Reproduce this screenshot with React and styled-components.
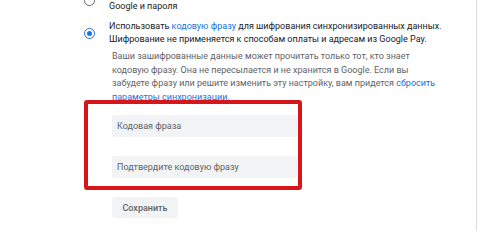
import React from "react";
import styled, { createGlobalStyle } from "styled-components";

const Global = createGlobalStyle`
  html, body { margin: 0; padding: 0; background: #ffffff; }
  body { font-family: Roboto, "Noto Sans", "Liberation Sans", sans-serif; }
  * { box-sizing: border-box; }
`;

const Page = styled.div`
  width: 477px;
  height: 231px;
  border-right: 1px solid #dadce0;
  overflow: hidden;
  background: #fff;
`;

const Content = styled.div`
  margin-top: -13px;
  padding-left: 84px;
  display: flex;
  flex-direction: column;
`;

const OptionRow = styled.label`
  display: flex;
  align-items: center;
  gap: 14px;
  margin-bottom: ${(p) => p.$gap || 0}px;
`;

const Radio = styled.span`
  flex: none;
  width: 11px;
  height: 11px;
  border-radius: 50%;
  border: 1.5px solid ${(p) => (p.$checked ? "#1a73e8" : "#5f6368")};
  display: flex;
  align-items: center;
  justify-content: center;
  &::after {
    content: "";
    width: 5px;
    height: 5px;
    border-radius: 50%;
    background: ${(p) => (p.$checked ? "#1a73e8" : "transparent")};
  }
`;

const OptionText = styled.div`
  width: 334px;
  font-size: 9px;
  line-height: 13px;
  color: #202124;
`;

const Link = styled.a`
  color: #1a6fd9;
  text-decoration: none;
`;

const Description = styled.p`
  margin: 4px 0 0 28px;
  width: 332px;
  font-size: 9px;
  line-height: 13.5px;
  color: #5f6368;
`;

const InputGroup = styled.div`
  position: relative;
  margin: 11px 0 0 28px;
  width: 185px;
  display: flex;
  flex-direction: column;
  gap: 19px;
`;

const Field = styled.div`
  height: 22px;
  background: #f1f3f4;
  border-radius: 2px;
  padding-left: 5px;
  display: flex;
  align-items: center;
  font-size: 9px;
  color: #5f6368;
`;

const Highlight = styled.div`
  position: absolute;
  top: -15px;
  left: -28px;
  right: -5px;
  bottom: -12px;
  border: 4px solid #d9151c;
  border-radius: 3px;
  pointer-events: none;
`;

const SaveButton = styled.button`
  margin: 19px 0 0 28px;
  align-self: flex-start;
  width: 66px;
  height: 21px;
  border: none;
  border-radius: 3px;
  background: #f1f3f4;
  color: #5f6368;
  font-family: inherit;
  font-size: 9px;
  font-weight: 500;
  padding: 0;
`;

export default function App() {
  return (
    <>
      <Global />
      <Page>
        <Content>
          <OptionRow $gap={7}>
            <Radio />
            <OptionText>
              Шифровать синхронизированные пароли с помощью имени пользователя
              <br />
              Google и пароля
            </OptionText>
          </OptionRow>
          <OptionRow>
            <Radio $checked />
            <OptionText>
              Использовать <Link>кодовую фразу</Link> для шифрования
              синхронизированных данных. Шифрование не применяется к способам
              оплаты и адресам из Google Pay.
            </OptionText>
          </OptionRow>
          <Description>
            Ваши зашифрованные данные может прочитать только тот, кто знает
            кодовую фразу. Она не пересылается и не хранится в Google. Если вы
            забудете фразу или решите изменить эту настройку, вам придется{" "}
            <Link>сбросить параметры синхронизации</Link>.
          </Description>
          <InputGroup>
            <Field>Кодовая фраза</Field>
            <Field>Подтвердите кодовую фразу</Field>
            <Highlight />
          </InputGroup>
          <SaveButton>Сохранить</SaveButton>
        </Content>
      </Page>
    </>
  );
}
